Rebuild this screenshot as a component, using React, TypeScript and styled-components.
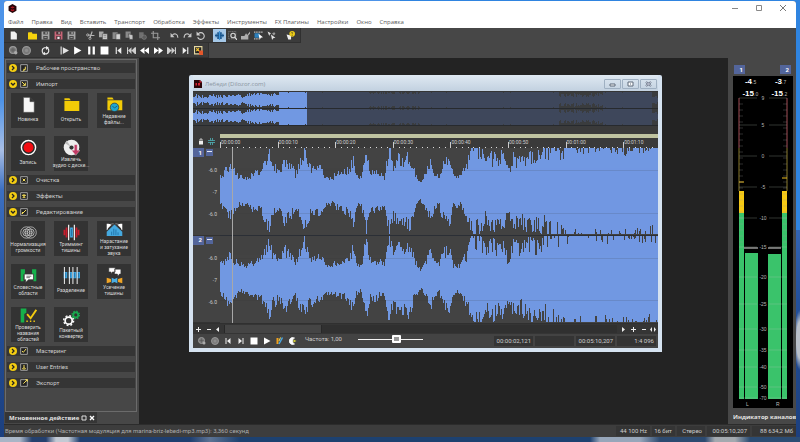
import React from 'react';
import styled, { createGlobalStyle } from 'styled-components';

const GlobalStyle = createGlobalStyle`
  * { box-sizing: border-box; }
  body {
    margin: 0;
    font-family: Roboto, 'Noto Sans', sans-serif;
    font-size: 6px;
    line-height: 8px;
    color: #cdcdcd;
  }
  button, input { font: inherit; color: inherit; margin: 0; padding: 0; border: 0; background: none; }
  svg { display: block; }
`;

const Desktop = styled.div`
  min-height: 100vh;
  padding: 1px 4px 5px;
  display: flex;
  background:
    radial-gradient(ellipse 6px 30px at 100% 340px, #b9c0c9 0 60%, transparent),
    linear-gradient(90deg, transparent 50%, #2f84e0 50%) 0 0 / 100% 230px no-repeat,
    linear-gradient(90deg, #a9b5c6 0 20px, #24406e 32px 46px, #c3cad4 56px 68px, #1f3f70 80px 190px, #5c7394 210px, #1d4170 240px 590px, #97a6ba 600px 640px, #2c4a70 660px 705px, #a3a9af 715px 735px, #2b4c73 750px) 0 100% / 100% 5px no-repeat,
    linear-gradient(#4d93e8 0 100px, #a9bfe6 150px, #3c6fc0 190px, #23509c 300px, #1c3f7d);
`;

const AppWindow = styled.div`
  flex: 1;
  min-width: 0;
  display: flex;
  flex-direction: column;
  border-radius: 3px 3px 0 0;
  overflow: hidden;
  background: #474747;
`;

const TitleBar = styled.header`
  height: 14px;
  padding: 0 8px 0 4px;
  display: flex;
  align-items: center;
  justify-content: space-between;
  background: #fff;
`;

const CaptionButtons = styled.div`
  display: flex;
  gap: 14px;
`;

const CaptionButton = styled.button`
  width: 10px;
  height: 10px;
  display: grid;
  place-items: center;
`;

const MenuBar = styled.nav`
  height: 13px;
  padding: 0 4px;
  display: flex;
  align-items: center;
  gap: 8px;
  background: #fff;
  color: #5a5a5a;
  font-family: 'Open Sans', 'Noto Sans', sans-serif;
`;

const MenuLink = styled.a`
  color: inherit;
  text-decoration: none;
  white-space: nowrap;
`;

const Toolbar = styled.div`
  align-self: flex-start;
  height: 15px;
  padding: 0 3px;
  display: flex;
  align-items: center;
  gap: 6px;
  background: #3b3b3b;
  border: solid #303030;
  border-width: 0 1px 1px 0;
`;

const ToolGroup = styled.div<{ $wide?: boolean }>`
  display: flex;
  justify-content: space-between;
  width: ${props => props.$wide ? '147px' : 'auto'};
`;

const ToolButton = styled.button<{ $active?: boolean }>`
  width: 13px;
  height: 13px;
  display: grid;
  place-items: center;
  background: ${props => props.$active ? '#a5c8e8' : 'transparent'};
`;

const Workspace = styled.div`
  flex: 1;
  display: flex;
`;

const SidePanel = styled.aside`
  width: 135px;
  flex: none;
  display: flex;
  flex-direction: column;
  padding: 1px 2px 1px 1px;
  background: #474747;
`;

const SectionList = styled.div`
  flex: 1;
  border: 1px solid #6b6b6b;
  padding: 0 1px;
`;

const SectionButton = styled.button`
  width: 100%;
  height: 16px;
  padding: 3px 0;
  display: block;
  text-align: left;
`;

const SectionBar = styled.span`
  height: 10px;
  padding-left: 2px;
  display: flex;
  align-items: center;
  background: #353535;
`;

const SectionName = styled.span`
  margin-left: 8px;
`;

const BoxIcon = styled.svg`
  margin-left: 3px;
`;

const TileGrid = styled.div`
  display: grid;
  grid-template-columns: repeat(3, 34px);
  gap: 8px 9px;
  padding: 1px 4px;
`;

const Tile = styled.button`
  height: 35px;
  display: flex;
  flex-direction: column;
  align-items: center;
  justify-content: center;
  background: #333;
  color: #dadada;
  font-size: 5px;
  line-height: 6px;
`;

const TileLabel = styled.span`
  min-height: 12px;
  display: flex;
  align-items: center;
  text-align: center;
  white-space: pre;
`;

const DockTab = styled.div`
  align-self: flex-start;
  height: 11px;
  padding: 0 2px 0 4px;
  display: flex;
  align-items: center;
  gap: 2px;
  background: #363636;
  color: #e2e2e2;
  font-family: 'Open Sans', 'Noto Sans', sans-serif;
  font-weight: bold;
  white-space: nowrap;
`;

const DockButton = styled.button`
  width: 6px;
  height: 6px;
`;

const Canvas = styled.main`
  flex: 1;
  min-width: 0;
  padding: 17px 66px 0 50px;
  background: #232323;
`;

const DocWindow = styled.section`
  border: 4px solid #d5e2f0;
  border-top: 0;
  border-radius: 2px 2px 0 0;
  background: #3a3a3a;
`;

const DocTitle = styled.header`
  height: 16px;
  padding: 2px 1px 0;
  display: flex;
  align-items: center;
  gap: 3px;
  background: linear-gradient(#dfe9f2, #c2d1e0);
  color: #8a95a1;
  font-family: 'Open Sans', 'Noto Sans', sans-serif;
`;

const DocButtons = styled.div`
  margin-left: auto;
  display: flex;
  gap: 1px;
`;

const DocButton = styled.button`
  width: 17px;
  height: 10px;
  display: grid;
  place-items: center;
  border: 1px solid #9fb0c2;
  border-radius: 1px;
`;

const Overview = styled.svg`
  width: 100%;
  height: 35px;
  background: #353535;
`;

const TimeRow = styled.div`
  display: flex;
  height: 22px;
  padding-top: 8px;
`;

const LockCell = styled.div`
  width: 27px;
  flex: none;
  display: flex;
  align-items: center;
  justify-content: space-evenly;
`;

const Timeline = styled.div`
  flex: 1;
  min-width: 0;
  border-top: 4px solid #bfc3a0;
`;

const Ruler = styled.div`
  height: 10px;
  display: flex;
  overflow: hidden;
  background: repeating-linear-gradient(90deg, #ddd 0 1px, transparent 1px 1.315%) 0 100% / 100% 1px no-repeat;
`;

const RulerMark = styled.span`
  flex: 0 0 13.15%;
  height: 10px;
  background: linear-gradient(#ccc, #ccc) 0 100% / 1px 6px no-repeat;
  font-size: 5px;
  line-height: 8px;
  padding-left: 1px;
`;

const WaveRow = styled.div`
  display: flex;
  height: 175px;
  background: #434343;
`;

const ChannelColumn = styled.div`
  width: 27px;
  flex: none;
  display: grid;
  grid-template-rows: 1fr 1fr;
`;

const ChannelHead = styled.div`
  display: grid;
  grid-template-rows: 11px repeat(3, 22px);
  border-bottom: 1px solid #333;
  font-size: 5px;
`;

const ChannelBadges = styled.div`
  display: flex;
  gap: 2px;
`;

const Badge = styled.span`
  width: 11px;
  height: 9px;
  display: flex;
  align-items: center;
  justify-content: flex-end;
  padding-right: 2px;
  background: #53659b;
  color: #fff;
  font-size: 6px;
  font-weight: bold;
`;

const FoldButton = styled.button`
  width: 7px;
  height: 7px;
  margin-top: 1px;
  display: grid;
  place-items: center;
  background: #53659b;
`;

const Level = styled.span`
  align-self: center;
  justify-self: end;
  padding-right: 3px;
`;

const Wave = styled.svg`
  flex: 1;
  min-width: 0;
  height: 100%;
`;

const ScrollRow = styled.div`
  height: 11px;
  padding: 0 1px;
  display: flex;
  align-items: center;
  gap: 2px;
  border-top: 1px solid #303030;
  background: #353535;
`;

const StepButton = styled.button`
  width: 8px;
  height: 8px;
  display: grid;
  place-items: center;
`;

const ScrollTrack = styled.div`
  flex: 1;
  height: 8px;
  background: #303030;
`;

const ScrollThumb = styled.div`
  width: 25%;
  height: 8px;
  background: #454545;
  border: solid #282828;
  border-width: 0 1px;
`;

const TransportRow = styled.div`
  height: 14px;
  padding: 0 2px;
  display: flex;
  align-items: center;
  background: #434343;
`;

const RateLabel = styled.label`
  width: 38px;
  margin: 0 15px 4px 6px;
  white-space: nowrap;
`;

const RateSlider = styled.input`
  appearance: none;
  width: 65px;
  height: 8px;
  margin-bottom: 4px;
  background: linear-gradient(#f2f2f2, #f2f2f2) center / 100% 1px no-repeat;
  &::-webkit-slider-thumb {
    appearance: none;
    width: 9px;
    height: 8px;
    border: 2px solid #fff;
    border-radius: 1px;
    background: #999;
  }
`;

const Readouts = styled.div`
  margin-left: auto;
  display: grid;
  grid-template-columns: repeat(4, 39px);
  gap: 2px;
`;

const Readout = styled.output`
  height: 10px;
  padding-right: 2px;
  background: #343434;
  text-align: right;
  line-height: 10px;
`;

const MeterPanel = styled.aside`
  width: 68px;
  flex: none;
  padding: 7px 3px 1px 5px;
  display: flex;
  flex-direction: column;
`;

const MeterBadges = styled.div`
  padding: 0 2px 2px 1px;
  display: flex;
  justify-content: space-between;
`;

const MeterFace = styled.svg`
  width: 100%;
  background: #000;
  font-family: 'Liberation Sans', Arial, sans-serif;
`;

const MeterTitle = styled.h2`
  margin: auto -3px 0 0;
  overflow: hidden;
  color: #e2e2e2;
  font-family: 'Open Sans', 'Noto Sans', sans-serif;
  font-size: 6px;
  line-height: 11px;
  white-space: nowrap;
`;

const StatusBar = styled.footer`
  height: 13px;
  padding-left: 1px;
  display: flex;
  align-items: center;
  gap: 2px;
  background: #3d3d3d;
  border-top: 1px solid #2c2c2c;
  color: #adadad;
  white-space: nowrap;
`;

const StatusMessage = styled.span`
  flex: 1;
`;

const StatusCell = styled.span<{ $w: number }>`
  width: ${props => props.$w}px;
  height: 10px;
  padding-right: 3px;
  line-height: 10px;
  text-align: right;
  color: #cdcdcd;
  background: #353535;
`;

// toolbar glyphs on a 16 x 16 grid
const glyphs: Record<string, React.ReactNode> = {
  file: <path d="M3 1h7l4 4v10H3z" fill="#f2f2f2" />,
  folder: <path d="M1 2h6l1 3h8v10H0V3z" fill="#f5d20d" />,
  save: <><path d="M1 1h14v14H1z" fill="#a6a6a6" /><path d="M4 1h8v5H4zM4 9h8v6H4z" fill="#4a4a4a" /><path d="M8 2h2v3H8zM6 11h4v1H6z" fill="#ddd" /></>,
  saveAs: <><path d="M1 1h14v14H1z" fill="#c86476" /><path d="M4 1h8v5H4zM4 9h8v6H4z" fill="#4a3338" /><path d="M8 2h2v3H8zM6 10h4v4H6z" fill="#eee" /></>,
  cut: <><path d="M3 7l12 1M11 1L7 12" stroke="#b5b5b5" strokeWidth="2" fill="none" /><circle cx="3" cy="7" r="2" fill="none" stroke="#b5b5b5" strokeWidth="1.5" /><circle cx="7" cy="13" r="2" fill="none" stroke="#b5b5b5" strokeWidth="1.5" /></>,
  copy: <><path d="M0 1h8v10H0z" fill="#a8a8a8" /><path d="M6 5h9v10H6z" fill="#cfcfcf" stroke="#3b3b3b" /><path d="M8 8h5M8 11h5" stroke="#666" /></>,
  paste: <><path d="M1 2h9v12H1z" fill="#8a8a8a" /><path d="M7 5h8v10H7z" fill="#d5d5d5" stroke="#3b3b3b" /></>,
  pasteMix: <><path d="M1 1h9v11H1z" fill="#8a8a8a" /><path d="M6 5l8 2v8H8z" fill="#c5c5c5" stroke="#3b3b3b" /></>,
  pasteDim: <><path d="M2 2h8v11H2z" fill="#707070" /><circle cx="11" cy="11" r="4" fill="#5c5c5c" stroke="#8a8a8a" /></>,
  crop: <path d="M4 0v12h12M0 4h12v12" stroke="#999" strokeWidth="2" fill="none" />,
  undo: <><path d="M4 8c3-5 10-3 10 4" stroke="#c5c5c5" strokeWidth="2" fill="none" /><path d="M1 3v8h7z" fill="#c5c5c5" /></>,
  redo: <><path d="M12 8C9 3 2 5 2 12" stroke="#c5c5c5" strokeWidth="2" fill="none" /><path d="M15 3v8H8z" fill="#c5c5c5" /></>,
  repeat: <><path d="M4 5a6 6 0 1 1-1 6" stroke="#ccc" strokeWidth="2" fill="none" /><path d="M1 1v7h7z" fill="#ccc" /></>,
  wave: <><path d="M0 7h16v2H0zM1 5h2v6H1zM4 2h3v12H4zM9 2h3v12H9zM13 5h2v6h-2z" fill="#17568f" /><path d="M7 0h2v16H7z" fill="#3d93d6" /></>,
  magnify: <><path d="M1 1h13v13H1z" fill="none" stroke="#999" strokeDasharray="2 1" /><circle cx="9" cy="8" r="4" fill="#444" stroke="#d5d5d5" strokeWidth="2" /><path d="M12 11l4 5" stroke="#ddd" strokeWidth="2" /></>,
  envelope: <path d="M0 15V9h6l3-5 2 3 5-6v4l-3 3v7z" fill="#aeaeae" />,
  select: <><path d="M0 2h16M0 14h8" stroke="#bbb" strokeWidth="2" strokeDasharray="2 1" /><path d="M1 4h9v8H1z" fill="#2c80bd" /><path d="M8 5l8 6-4 1-2 4z" fill="#fff" /></>,
  tools: <><path d="M1 1l6 3-2 2-1 3zM7 6l8 6-4 1-2 3z" fill="#e0e0e0" /><path d="M9 4l4-2 2 3-3 3z" fill="#9b9b9b" /></>,
  help: <><path d="M1 6l8 2v7H4z" fill="#eee" /><circle cx="11" cy="5" r="5" fill="#f0cf16" /><path d="M9 4c1-3 5-1 2 1v1M11 7v2" stroke="#333" fill="none" /></>,
  recOpts: <><circle cx="7" cy="7" r="6" fill="#777" stroke="#999" strokeWidth="2" /><path d="M3 7h8M7 3v8" stroke="#555" /><circle cx="12" cy="12" r="3" fill="#aaa" /></>,
  rec: <><circle cx="8" cy="8" r="7" fill="#7a7a7a" stroke="#969696" strokeWidth="2" /><circle cx="8" cy="8" r="3" fill="#8d8d8d" /></>,
  loop: <><path d="M4 13a6 6 0 0 1 2-10h5M12 4a6 6 0 0 1-2 10H5" stroke="#eee" strokeWidth="2" fill="none" /><path d="M9 0l5 3-5 4zM7 10v6l-5-2z" fill="#eee" /></>,
  playAll: <path d="M1 1h2v14H1zM5 2l11 6-11 6z" fill="#e4e4e4" />,
  play: <path d="M2 1l13 7L2 15z" fill="#fff" />,
  pause: <path d="M2 1h4v14H2zM10 1h4v14h-4z" fill="#fff" />,
  stop: <path d="M1 1h14v14H1z" fill="#fff" />,
  start: <path d="M3 2h2v12H3zM13 2v12L6 8z" fill="#eee" />,
  end: <path d="M11 2h2v12h-2zM3 2v12l7-6z" fill="#eee" />,
  prev: <path d="M0 2h2v12H0zM8 2v12L2 8zM14 2v12L8 8zM14 2h2v12h-2z" fill="#cfcfcf" />,
  next: <path d="M14 2h2v12h-2zM8 2v12l6-6zM2 2v12l6-6zM0 2h2v12H0z" fill="#cfcfcf" />,
  rewind: <path d="M8 2v12L0 8zM16 2v12L8 8z" fill="#fff" />,
  forward: <path d="M8 2v12l8-6zM0 2v12l8-6z" fill="#fff" />,
  marker: <><path d="M1 1h13v13H1z" fill="#222" stroke="#e6d9a2" strokeWidth="2" /><path d="M4 4l5 5M9 4l-5 5" stroke="#f4c431" strokeWidth="2" /><path d="M9 8h7v8H9z" fill="#e4572b" /></>,
  pens: <><path d="M1 2h4v12H1z" fill="#f0a11d" /><path d="M13 1L6 14" stroke="#4aa7e4" strokeWidth="3" /><path d="M9 1L6 8" stroke="#eedc5a" strokeWidth="2" /></>,
  moon: <><path d="M11 2a7 7 0 1 0 0 12C6 12 6 4 11 2z" fill="#fff" stroke="#fff" strokeWidth="1.5" /><path d="M9 5l6 3-6 3z" fill="#d8d333" /></>,
};

const Glyph: React.FC<{ name: string; size?: number }> = ({ name, size = 9 }) => (
  <svg width={size} height={size} viewBox="0 0 16 16" aria-hidden="true">{glyphs[name]}</svg>
);

const editGroups = [
  ['file'],
  ['folder', 'save', 'saveAs', 'save'],
  ['cut', 'copy', 'paste', 'pasteMix', 'pasteDim', 'crop'],
  ['undo', 'redo', 'repeat'],
  ['wave', 'magnify', 'envelope', 'select', 'tools'],
  ['help'],
];

const transportGroups = [
  ['recOpts', 'rec'],
  ['loop'],
  ['playAll', 'play', 'pause', 'stop', 'start', 'prev', 'rewind', 'forward', 'next', 'end', 'marker'],
];

const docTransport = ['recOpts', 'rec', 'start', 'end', 'stop', 'play', 'pens', 'moon'];

const menuItems = ['Файл', 'Правка', 'Вид', 'Вставить', 'Транспорт', 'Обработка', 'Эффекты', 'Инструменты', 'FX Плагины', 'Настройки', 'Окно', 'Справка'];

const greenFlags = <path d="M1 3h6v6l-2 2v9H1zM23 3h-6v6l2 2v9h4z" fill="#16b04b" />;

// tile pictures on a 24 x 24 grid
const art: Record<string, React.ReactNode> = {
  blank: <path d="M5 2h9l6 6v15H5zM14 2v6h6" fill="#f7f7f7" stroke="#555" strokeWidth=".7" />,
  open: <path d="M2 3h7l2 3H2zM2 7h21v14H2z" fill="#f2cb07" />,
  recent: <><path d="M2 2h7l2 3H2zM2 6h21v14H2z" fill="#f2cb07" /><circle cx="12" cy="16" r="6" fill="#20a6cf" stroke="#333" /><path d="M9 14l3 3 4-3" stroke="#154a63" fill="none" /></>,
  record: <><circle cx="12" cy="12" r="10" fill="#2b2b2b" stroke="#fff" strokeWidth="2" /><circle cx="12" cy="12" r="7" fill="#f20d12" /></>,
  disc: <><circle cx="12" cy="12" r="11" fill="#eee" /><path d="M3 6l8 5-6-9z" fill="#bbb" /><circle cx="12" cy="12" r="3" fill="#333" /><path d="M16 8h4v8h4l-6 7-6-7h4z" fill="#c23a65" stroke="#eee" strokeWidth=".5" /></>,
  normalize: <g fill="none" stroke="#d5d5d5"><ellipse cx="9" cy="12" rx="8" ry="8" /><ellipse cx="15" cy="12" rx="8" ry="8" /><ellipse cx="9" cy="12" rx="5" ry="5" /><ellipse cx="15" cy="12" rx="5" ry="5" /><circle cx="9" cy="12" r="2" /><circle cx="15" cy="12" r="2" /></g>,
  trim: <><path d="M2 8v8M5 5v14M19 5v14M22 8v8" stroke="#c91c2c" strokeWidth="2.5" /><path d="M8 1v22M16 1v22" stroke="#fff" strokeWidth="1.6" /><path d="M10 5h4v14h-4z" fill="#42a8e0" /><path d="M12 7v10" stroke="#1a5f93" /></>,
  fade: <><path d="M1 21v-6L12 5l11 10v6z" fill="#45a9df" /><path d="M1 13L11 4H1zM23 13L13 4h10z" fill="#fff" /><path d="M4 3l5 2-6 6M20 3l-5 2 6 6" stroke="#333" strokeWidth="1.5" fill="none" /><path d="M8 20v-5M11 20v-9M14 20v-8M17 20v-4" stroke="#14639b" /></>,
  regions: <>{greenFlags}<path d="M6 10h13v8h-7l-4 4v-4H6z" fill="#fff" stroke="#333" /><path d="M9 13h7M9 15h5" stroke="#444" /></>,
  split: <><path d="M1 7h5v9H1zM8 7h5v9H8zM14 7h5v9h-5zM20 7h4v9h-4z" fill="#3fa5df" /><path d="M3 8v7M10 8v7M16 8v7M22 8v7" stroke="#15598d" /><path d="M2 0v24M9 0v24M14 0v24M20 0v24" stroke="#fff" strokeWidth="1.3" /></>,
  silence: <><path d="M4 1h9v6H9l-2 3V7H4zM12 3h9v7h-2l-2 3-1-3h-4z" fill="#fff" stroke="#333" strokeWidth=".8" /><path d="M1 15l6 2v4l-6 2zM23 15l-6 2v4l6 2z" fill="#f0a526" /><path d="M8 15l4 2 4-2v8l-4-2-4 2z" fill="#4aaee3" /></>,
  names: <><path d="M1 2h8v6L6 10v12H1z" fill="#16b04b" /><path d="M10 10l5 6 8-12" stroke="#f3cb10" strokeWidth="2.6" fill="none" /><path d="M9 20h2M14 20h2M19 20h2" stroke="#f3cb10" strokeWidth="2" /></>,
  batch: <><circle cx="8" cy="15" r="5" fill="none" stroke="#fff" strokeWidth="2.5" /><circle cx="8" cy="15" r="7" fill="none" stroke="#fff" strokeWidth="2" strokeDasharray="2.7 2.8" /><circle cx="18" cy="7" r="3.5" fill="none" stroke="#19a84d" strokeWidth="2.5" /><circle cx="18" cy="7" r="5.2" fill="none" stroke="#19a84d" strokeWidth="2" strokeDasharray="2 2.1" /></>,
};

interface TileData {
  icon: string;
  label: string;
}

interface SectionData {
  name: string;
  mark: string;
  tiles?: TileData[];
}

const sections: SectionData[] = [
  { name: 'Рабочее пространство', mark: 'M8 4v4H5M8 8l-4 3' },
  {
    name: 'Импорт',
    mark: 'M3 3l5 5M8 4v4H4',
    tiles: [
      { icon: 'blank', label: 'Новинка' },
      { icon: 'open', label: 'Открыть' },
      { icon: 'recent', label: 'Недавние\nфайлы...' },
      { icon: 'record', label: 'Запись' },
      { icon: 'disc', label: 'Извлечь\nаудио с диске...' },
    ],
  },
  { name: 'Очистка', mark: 'M4 4l4 4M8 4L4 8' },
  { name: 'Эффекты', mark: 'M6 3v6M3 5h6M4 9l2-2 2 2' },
  {
    name: 'Редактирование',
    mark: 'M3 9l6-6M3 9l1-3',
    tiles: [
      { icon: 'normalize', label: 'Нормализация\nгромкости' },
      { icon: 'trim', label: 'Тримминг\nтишины' },
      { icon: 'fade', label: 'Нарастание\nи затухание\nзвука' },
      { icon: 'regions', label: 'Словестные\nобласти' },
      { icon: 'split', label: 'Разделение' },
      { icon: 'silence', label: 'Усечение\nтишины' },
      { icon: 'names', label: 'Проверить\nназвания\nобластей' },
      { icon: 'batch', label: 'Пакетный\nконвертер' },
    ],
  },
  { name: 'Мастеринг', mark: 'M3 6l2 2 4-5' },
  { name: 'User Entries', mark: 'M6 3v3M4 9c0-3 4-3 4 0z' },
  { name: 'Экспорт', mark: 'M5 7l6-6M8 1h3v3' },
];

const Section: React.FC<{ section: SectionData }> = ({ section }) => {
  const open = !!section.tiles;
  return (
    <>
      <SectionButton aria-expanded={open}>
        <SectionBar>
          <svg width="8" height="8" viewBox="0 0 16 16">
            <circle cx="8" cy="8" r="8" fill="#f3cd12" />
            <path d={open ? 'M4 6l4 4 4-4' : 'M6 4l4 4-4 4'} stroke="#222" strokeWidth="2.5" fill="none" />
          </svg>
          <BoxIcon width="8" height="8" viewBox="0 0 12 12">
            <path d="M1 1h10v10H1z" fill="#222" stroke="#d8d8d8" />
            <path d={section.mark} stroke="#f3dc58" strokeWidth="1.5" fill="none" />
          </BoxIcon>
          <SectionName>{section.name}</SectionName>
        </SectionBar>
      </SectionButton>
      {section.tiles && (
        <TileGrid>
          {section.tiles.map(tile => (
            <Tile key={tile.icon}>
              <svg width="17" height="17" viewBox="0 0 24 24">{art[tile.icon]}</svg>
              <TileLabel>{tile.label}</TileLabel>
            </Tile>
          ))}
        </TileGrid>
      )}
    </>
  );
};

const noise = (n: number) => {
  const v = Math.sin(n * 127.1 + 11.7) * 43758.5453;
  return v - Math.floor(v);
};

// [x, peak 0..1] along the 438 units of the main view
const peaks = [
  [0, 0.36], [9, 0.62], [14, 0.48], [18, 0.36], [26, 0.34], [34, 0.48], [40, 0.46], [44, 0.66], [49, 0.94], [52, 0.64],
  [58, 0.5], [65, 0.74], [70, 0.62], [75, 0.45], [84, 0.92], [90, 0.58], [100, 0.58], [105, 0.4], [110, 0.32], [116, 0.4],
  [124, 0.48], [130, 0.6], [133, 0.78], [136, 0.4], [141, 0.32], [146, 0.96], [150, 0.5], [158, 0.48], [164, 0.4], [169, 1.08],
  [173, 0.56], [178, 0.82], [184, 0.76], [189, 0.88], [195, 0.4], [201, 0.24], [206, 0.46], [210, 0.7], [216, 0.4], [219, 0.36],
  [222, 0.62], [229, 0.82], [233, 0.36], [240, 0.34], [246, 0.6], [252, 1.05], [260, 0.98], [266, 0.7], [272, 0.92], [278, 0.72],
  [282, 0.88], [288, 0.52], [293, 0.84], [300, 0.74], [310, 0.92], [320, 0.9], [335, 1.04], [350, 1.14], [400, 1.1], [438, 1.08],
];

const peakAt = (x: number) => {
  const i = Math.max(1, peaks.findIndex(p => p[0] >= x));
  const [x0, a] = peaks[i - 1];
  const [x1, b] = peaks[i];
  return a + (b - a) * (x - x0) / (x1 - x0);
};

const columnHeight = (x: number, seed: number) => {
  const depth = x < 240 ? 0.4 : x < 345 ? 0.46 : 0.36;
  const r = noise(x * 3 + seed);
  const dip = x < 240 ? r : r * r;
  const cluster = noise(Math.floor(x / 3) + seed * 2) - 0.5;
  const swing = x < 345 ? 0.12 : 0.05;
  return Math.min(1, peakAt(x) * (1.1 - depth * dip + swing * cluster));
};

const channelPath = (centre: number, seed: number) => {
  let d = '';
  for (let x = 0; x < 438; x++) {
    const up = Math.round(43 * columnHeight(x, seed));
    const down = Math.round(43 * columnHeight(x, seed + 71));
    d += `M${x} ${centre - up}h1v${up + down}h-1z`;
  }
  return d;
};

// depth of the dark gap at the edge of an overview channel
const overviewGap = (x: number) => {
  if (x < 56) return 2 + 4 * noise(x);
  if (x < 86) return 1 + 3 * noise(x);
  if (x > 175 && x < 228) return 3 * noise(x) - 0.5;
  if (x > 365 && x < 410) return 1 + 4 * noise(x);
  if (x > 458) return 4 + 3 * noise(x);
  return noise(x) > 0.97 ? 1 : 0;
};

const overviewPath = () => {
  let d = '';
  for (let x = 0; x < 465; x++) {
    const gap = Math.max(0, Math.round(overviewGap(x)));
    if (gap) d += `M${x} 1h1v${gap}h-1zM${x} ${17 - gap}h1v${gap * 2}h-1zM${x} ${34 - gap}h1v${gap}h-1z`;
  }
  return d;
};

const times = ['00:00:00', '00:00:10', '00:00:20', '00:00:30', '00:00:40', '00:00:50', '00:01:00', '00:01:10'];

const meterScale: [number, number][] = [
  [9, 22], [5, 49], [0, 80], [-5, 111], [-10, 142], [-15, 171], [-20, 201], [-25, 228], [-30, 253], [-35, 274], [-40, 291], [-50, 311], [-70, 322],
];

const minorTicks = Array.from({ length: 24 }, (_, i) => 28 + i * 6);

const Meter: React.FC = () => (
  <MeterFace viewBox="0 0 60 332" role="img" aria-label="Уровень">
    <g fill="#fff" fontSize="8" fontWeight="bold" textAnchor="end">
      <text x="19" y="8">-4</text>
      <text x="49" y="8">-3</text>
      <text x="21" y="20">-15</text>
      <text x="50" y="20">-15</text>
    </g>
    <g fill="#bbb" fontSize="5">
      <text x="19" y="8">.5</text>
      <text x="49" y="8">.7</text>
      <text x="21" y="20">.0</text>
      <text x="50" y="20">.2</text>
    </g>
    <path d="M6 22v50M54 22v50" stroke="#a34f57" />
    <path d="M6 72v43M54 72v43" stroke="#8a7a2c" />
    <path d="M6 106h5M49 102h5" stroke="#f0c020" />
    <path d="M6 115h5v22H6zM49 115h5v22h-5z" fill="#f6c914" />
    <path d="M6 137h5v186H6zM49 137h5v186h-5zM12 177h13v146H12zM35 178h13v145H35z" fill="#3ac36b" />
    <path d="M11 172h14M35 172h13" stroke="#ddd" />
    {minorTicks.map(y => <path key={y} d={`M6 ${y}h4M50 ${y}h4`} stroke="#999" strokeWidth=".5" opacity=".6" />)}
    {meterScale.map(([value, y]) => (
      <React.Fragment key={value}>
        <path d={`M6 ${y}h18M36 ${y}h18`} stroke="#b8c8b8" strokeWidth=".6" opacity=".45" />
        <text x="30" y={y + 2} fill="#b5b5b5" fontSize="5" textAnchor="middle">{value}</text>
      </React.Fragment>
    ))}
    <g fill="#bbb" fontSize="5">
      <text x="13" y="330">L</text>
      <text x="43" y="330">R</text>
    </g>
  </MeterFace>
);

const DocumentView: React.FC = () => (
  <DocWindow>
    <DocTitle>
      <svg width="8" height="8" viewBox="0 0 16 16"><path d="M0 0h12l4 4v12H0z" fill="#2a0608" /><path d="M11 0l5 5h-5zM3 6h3v5H3zM8 6h4v5H8z" fill="#d32133" /></svg>
      <span>Лебеди (Dilozor.com)</span>
      <DocButtons>
        <DocButton aria-label="Свернуть"><svg width="7" height="5"><path d="M1 2h5v2H1z" fill="#fff" stroke="#5c6878" /></svg></DocButton>
        <DocButton aria-label="Развернуть"><svg width="7" height="6"><path d="M1 1h5v4H1zM3 3h1" fill="#fff" stroke="#5c6878" /></svg></DocButton>
        <DocButton aria-label="Закрыть"><svg width="7" height="6"><path d="M1 1l5 4M6 1L1 5" stroke="#5c6878" strokeWidth="2" /><path d="M1 1l5 4M6 1L1 5" stroke="#eef" strokeWidth=".7" /></svg></DocButton>
      </DocButtons>
    </DocTitle>
    <Overview viewBox="0 0 465 35" preserveAspectRatio="none" shapeRendering="crispEdges">
      <path d="M0 1h114v33H0z" fill="#7198e2" />
      <path d="M114 1h351v33H114z" fill="#3e475b" />
      <path d={overviewPath()} fill="#3a3c3e" />
      <path d="M0 17h465v1H0zM0 34h465v1H0z" fill="#272a2e" />
    </Overview>
    <TimeRow>
      <LockCell>
        <svg width="6" height="7" viewBox="0 0 12 14"><path d="M2 6h8v7H2z" fill="#eee" /><path d="M4 6V2h4v4" stroke="#eee" strokeWidth="1.5" fill="none" /></svg>
        <svg width="7" height="7" viewBox="0 0 14 14"><path d="M0 5h14M0 9h14M5 0v5M9 0v5M5 9v5M9 9v5" stroke="#4fb3b8" strokeWidth="1.6" /></svg>
      </LockCell>
      <Timeline>
        <Ruler>{times.map(time => <RulerMark key={time}>{time}</RulerMark>)}</Ruler>
      </Timeline>
    </TimeRow>
    <WaveRow>
      <ChannelColumn>
        {[1, 2].map(channel => (
          <ChannelHead key={channel}>
            <ChannelBadges>
              <Badge>{channel}</Badge>
              <FoldButton aria-label={`Канал ${channel}`}><svg width="5" height="5"><path d="M0 1h5v1H0z" fill="#e6eaf5" /></svg></FoldButton>
            </ChannelBadges>
            <Level>-6.0</Level>
            <Level>-7</Level>
            <Level>-6.0</Level>
          </ChannelHead>
        ))}
      </ChannelColumn>
      <Wave viewBox="0 0 438 175" preserveAspectRatio="none" shapeRendering="crispEdges">
        <path d={channelPath(43, 5)} fill="#7198e2" />
        <path d={channelPath(131, 900)} fill="#7198e2" />
        <path d="M0 22h438M0 65h438M0 110h438M0 152h438" stroke="#333" opacity=".14" />
        <path d="M0 87h438v1H0z" fill="#2b2f36" />
        <path d="M12 0h1v175h-1z" fill="#a8a8a8" />
      </Wave>
    </WaveRow>
    <ScrollRow>
      <StepButton aria-label="Увеличить"><svg width="5" height="5"><path d="M0 2h5v1H0zM2 0h1v5H2z" fill="#eee" /></svg></StepButton>
      <StepButton aria-label="Уменьшить"><svg width="5" height="5"><path d="M1 2h4v1H1z" fill="#eee" /></svg></StepButton>
      <StepButton aria-label="Влево"><svg width="4" height="5"><path d="M3 0v5L0 2.5z" fill="#eee" /></svg></StepButton>
      <ScrollTrack><ScrollThumb /></ScrollTrack>
      <StepButton aria-label="Вправо"><svg width="4" height="5"><path d="M1 0v5l3-2.5z" fill="#eee" /></svg></StepButton>
      <StepButton aria-label="Крупнее"><svg width="5" height="5"><path d="M0 2h5v1H0zM2 0h1v5H2z" fill="#eee" /></svg></StepButton>
      <StepButton aria-label="Мельче"><svg width="5" height="5"><path d="M1 2h4v1H1z" fill="#eee" /></svg></StepButton>
      <StepButton aria-label="Весь файл"><svg width="6" height="5"><path d="M2 0v5L0 2.5zM4 0v5l2-2.5z" fill="#eee" /></svg></StepButton>
    </ScrollRow>
    <TransportRow>
      {docTransport.map(name => <ToolButton key={name} aria-label={name}><Glyph name={name} size={8} /></ToolButton>)}
      <RateLabel htmlFor="rate">Частота: 1,00</RateLabel>
      <RateSlider id="rate" type="range" min="0" max="100" defaultValue="60" />
      <Readouts>
        <Readout>00:00:02,121</Readout>
        <Readout />
        <Readout>00:05:10,207</Readout>
        <Readout>1:4 096</Readout>
      </Readouts>
    </TransportRow>
  </DocWindow>
);

const App: React.FC = () => (
  <>
    <GlobalStyle />
    <Desktop>
      <AppWindow>
        <TitleBar>
          <svg width="9" height="9" viewBox="0 0 16 16"><path d="M8 0l7 4v8l-7 4-7-4V4z" fill="#260507" /><path d="M8 4l4 2-4 2-4-2zM5 9l3 1 3-1v3l-3 1-3-1z" fill="#a8141f" /></svg>
          <CaptionButtons>
            <CaptionButton aria-label="Свернуть"><svg width="6" height="6"><path d="M0 3h6v1H0z" fill="#888" /></svg></CaptionButton>
            <CaptionButton aria-label="Развернуть"><svg width="6" height="6"><path d="M.5.5h5v5h-5z" fill="none" stroke="#888" /></svg></CaptionButton>
            <CaptionButton aria-label="Закрыть"><svg width="6" height="6"><path d="M0 0l6 6M6 0L0 6" stroke="#777" /></svg></CaptionButton>
          </CaptionButtons>
        </TitleBar>
        <MenuBar>
          {menuItems.map(item => <MenuLink key={item} href="#">{item}</MenuLink>)}
        </MenuBar>
        <Toolbar>
          {editGroups.map((group, index) => (
            <ToolGroup key={index}>
              {group.map((name, i) => <ToolButton key={i} $active={name === 'wave'} aria-label={name}><Glyph name={name} /></ToolButton>)}
            </ToolGroup>
          ))}
        </Toolbar>
        <Toolbar>
          {transportGroups.map((group, index) => (
            <ToolGroup key={index} $wide={group.length > 2}>
              {group.map(name => <ToolButton key={name} aria-label={name}><Glyph name={name} /></ToolButton>)}
            </ToolGroup>
          ))}
        </Toolbar>
        <Workspace>
          <SidePanel>
            <SectionList>
              {sections.map(section => <Section key={section.name} section={section} />)}
            </SectionList>
            <DockTab>
              <span>Мгновенное действие</span>
              <DockButton aria-label="Открепить"><svg width="6" height="6"><path d="M1 1h4v4H1z" fill="none" stroke="#ddd" /></svg></DockButton>
              <DockButton aria-label="Закрыть"><svg width="6" height="6"><path d="M1 1l4 4M5 1L1 5" stroke="#fff" strokeWidth="1.4" /></svg></DockButton>
            </DockTab>
          </SidePanel>
          <Canvas>
            <DocumentView />
          </Canvas>
          <MeterPanel>
            <MeterBadges><Badge>1</Badge><Badge>2</Badge></MeterBadges>
            <Meter />
            <MeterTitle>Индикатор каналов</MeterTitle>
          </MeterPanel>
        </Workspace>
        <StatusBar>
          <StatusMessage>Время обработки (Частотная модуляция для marina-briz-lebedi-mp3.mp3): 3,360 секунд</StatusMessage>
          <StatusCell $w={34}>44 100 Hz</StatusCell>
          <StatusCell $w={23}>16 бит</StatusCell>
          <StatusCell $w={28}>Стерео</StatusCell>
          <StatusCell $w={43}>00:05:10,207</StatusCell>
          <StatusCell $w={44}>88 634,2 Мб</StatusCell>
        </StatusBar>
      </AppWindow>
    </Desktop>
  </>
);

export default App;
